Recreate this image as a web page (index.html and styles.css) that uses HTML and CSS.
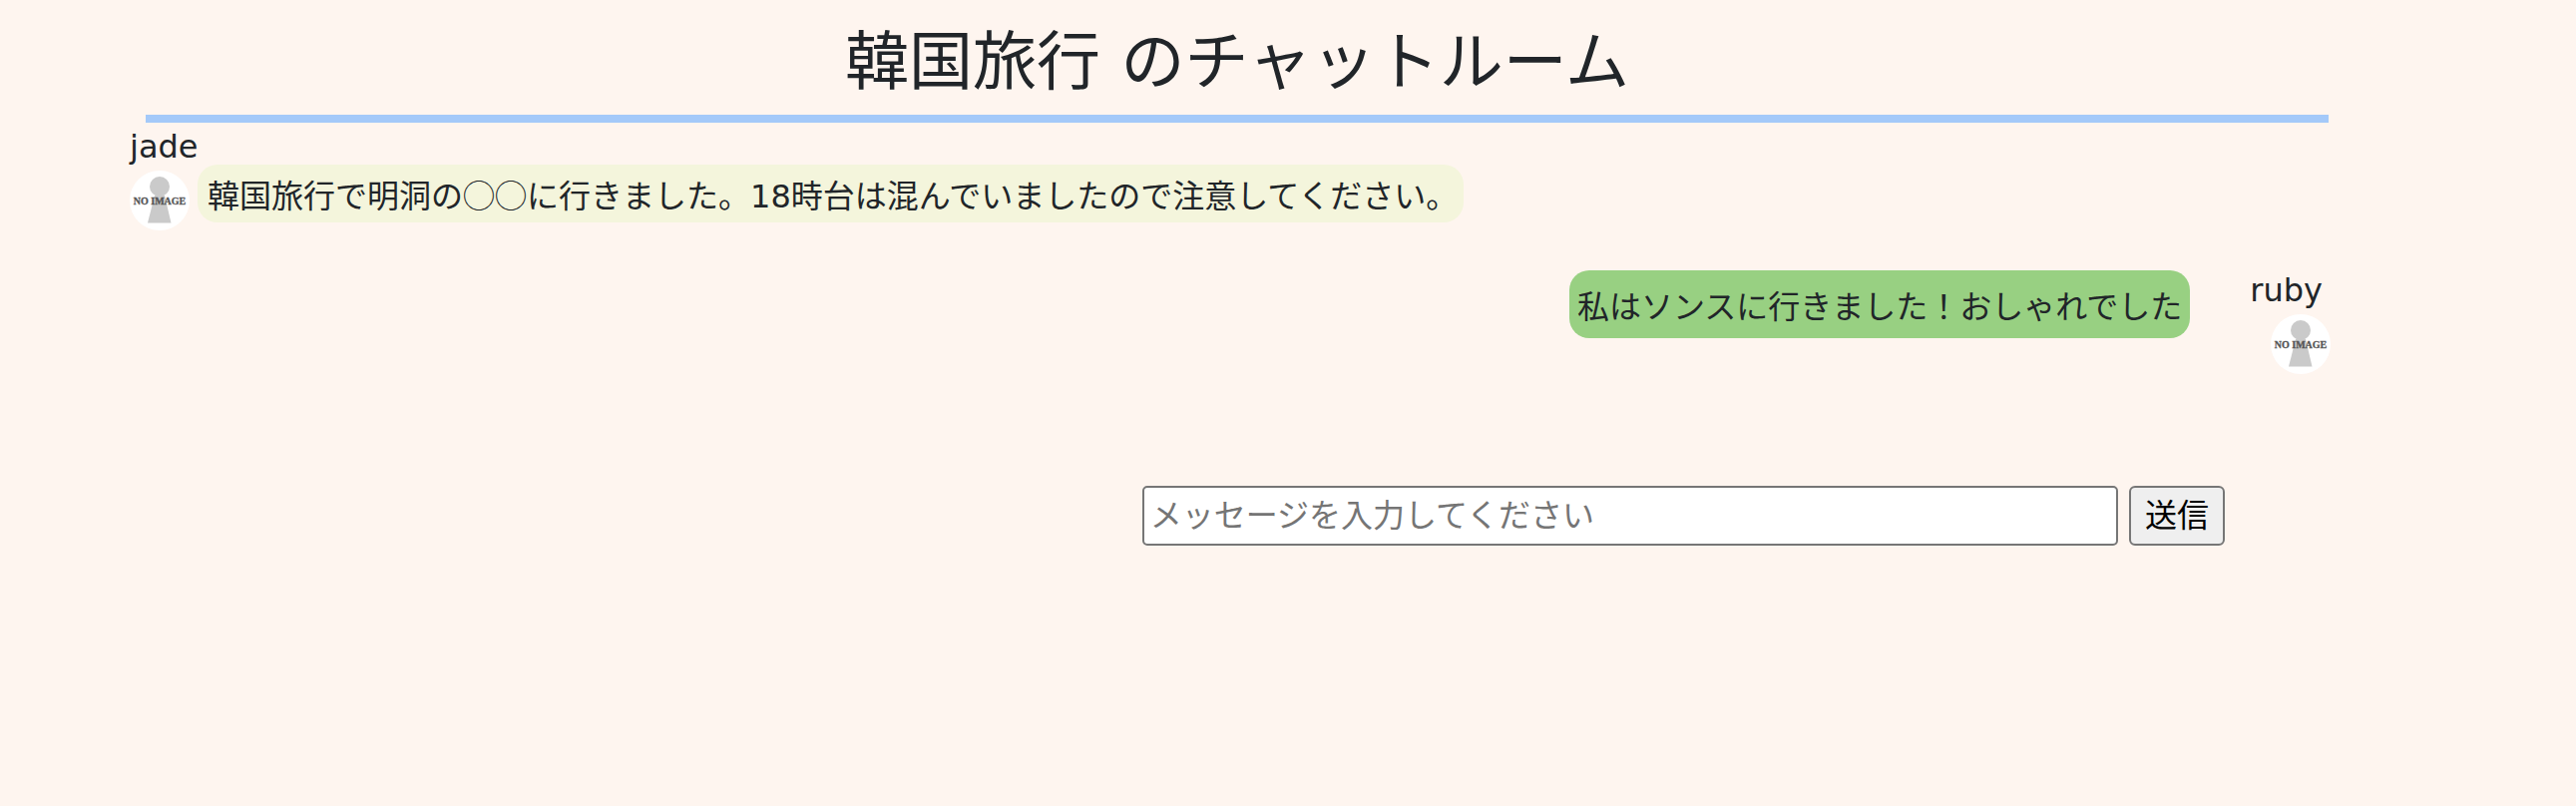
FILE: index.html
```html
<!DOCTYPE html>
<html lang="ja">
<head>
<meta charset="utf-8">
<meta name="viewport" content="width=device-width, initial-scale=1">
<title>韓国旅行 のチャットルーム</title>
<link rel="stylesheet" href="styles.css">
</head>
<body>
<main class="room">
  <h1 class="room-title">韓国旅行 のチャットルーム</h1>
  <section class="message">
    <p class="name">jade</p>
    <div class="message-row">
      <svg class="avatar" viewBox="0 0 60 60" role="img" aria-label="jade">
        <circle cx="30" cy="30" r="30" fill="#fff"/>
        <circle cx="30" cy="16" r="10" fill="#cacaca"/>
        <path d="M25 25h10l6.500 27.500h-23.500z" fill="#cacaca"/>
        <text class="avatar-label" x="30" y="34" text-anchor="middle">NO IMAGE</text>
      </svg>
      <p class="bubble">韓国旅行で明洞の◯◯に行きました。<span class="latin">18</span>時台は混んでいましたので注意してください。</p>
    </div>
  </section>
  <section class="message-own">
    <p class="bubble bubble-own">私はソンスに行きました！おしゃれでした</p>
    <div class="sender">
      <p class="name name-own">ruby</p>
      <svg class="avatar" viewBox="0 0 60 60" role="img" aria-label="ruby">
        <circle cx="30" cy="30" r="30" fill="#fff"/>
        <circle cx="30" cy="16" r="10" fill="#cacaca"/>
        <path d="M25 25h10l6.500 27.500h-23.500z" fill="#cacaca"/>
        <text class="avatar-label" x="30" y="34" text-anchor="middle">NO IMAGE</text>
      </svg>
    </div>
  </section>
  <form class="composer">
    <input class="composer-input" type="text" aria-label="メッセージ" placeholder="メッセージを入力してください">
    <button class="composer-send" type="button">送信</button>
  </form>
</main>
</body>
</html>
```
FILE: styles.css
```css
* {
  box-sizing: border-box;
}

body {
  margin: 0;
  background: #fef5ef;
  color: #212529;
  font-family: "DejaVu Sans", "Noto Sans CJK JP", sans-serif;
  font-size: 32px;
  line-height: 48px;
}

p {
  margin: 0;
}

.room {
  padding: 16px 246px 0 130px;
}

.room-title {
  margin: 0 2px 0 16px;
  padding: 6px 0 13px;
  border-bottom: 8px solid #a4c9f9;
  font-size: 64px;
  font-weight: 400;
  line-height: 80px;
  text-align: center;
}

.message-row {
  display: flex;
  align-items: flex-start;
  gap: 8px;
}

.message-row .bubble {
  margin-top: -6px;
}

.avatar {
  display: block;
  flex: none;
  width: 60px;
  height: 60px;
}

.avatar-label {
  fill: #555;
  stroke: #555;
  stroke-width: 0.3;
  font-family: "Liberation Serif", serif;
  font-size: 10px;
  font-weight: 700;
}

.bubble {
  padding: 5px 6px 5px 10px;
  border-radius: 20px;
  background: #f4f5dc;
  font-family: "Noto Sans CJK JP", sans-serif;
}

.latin {
  font-family: "DejaVu Sans", sans-serif;
  line-height: 1;
}

.message-own {
  display: flex;
  justify-content: flex-end;
  align-items: flex-start;
  gap: 60px;
  margin-top: 36px;
}

.bubble-own {
  margin-top: 4px;
  padding: 10px 8px;
  background: #98d082;
}

.sender {
  display: flex;
  flex-direction: column;
  align-items: flex-end;
}

.name-own {
  padding-right: 8px;
}

.composer {
  display: flex;
  gap: 11px;
  width: 49.2%;
  margin: 112px 106px 0 auto;
}

.composer-input,
.composer-send {
  height: 60px;
  border: 2px solid #767676;
  font: inherit;
}

.composer-input {
  flex: 1;
  min-width: 0;
  padding: 0 6px;
  border-radius: 5px;
  background: #fff;
}

.composer-input::placeholder {
  color: #757575;
  opacity: 1;
}

.composer-send {
  padding: 0 14px;
  border-radius: 6px;
  background: #efefef;
  color: #000;
}
```
